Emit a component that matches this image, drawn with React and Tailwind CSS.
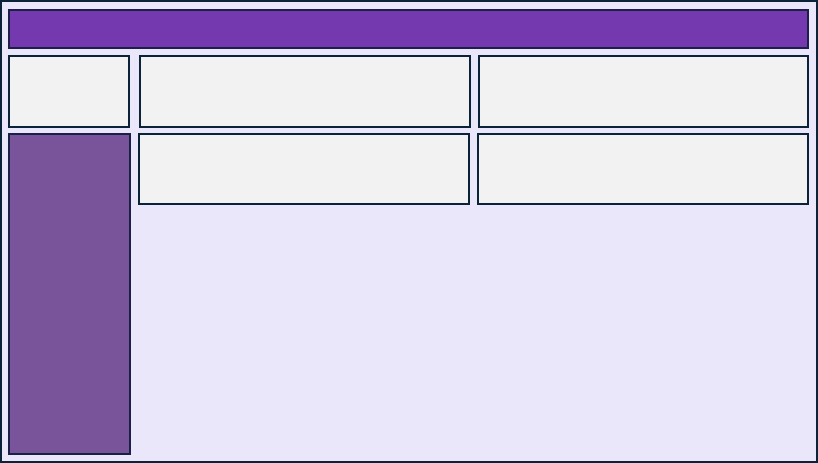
export default function App() {
  return (
    <div className="h-[463px] w-[818px] border-2 border-[#0b2339] bg-[#ebe7fb] px-[6px] pt-[7px] pb-[6px] flex flex-col">
      <div className="h-[40px] border-2 border-[#1c2048] bg-[#7439ae] mr-[1px]" />
      <div className="mt-[6px] h-[73px] flex">
        <div className="w-[122px] border-2 border-[#0b2339] bg-[#f2f2f2]" />
        <div className="ml-[9px] w-[332px] border-2 border-[#0b2339] bg-[#f2f2f2]" />
        <div className="ml-[7px] w-[331px] border-2 border-[#0b2339] bg-[#f2f2f2]" />
      </div>
      <div className="mt-[5px] flex-1 flex items-start">
        <div className="w-[123px] self-stretch border-2 border-[#1a2147] bg-[#7a549a]" />
        <div className="ml-[7px] w-[332px] h-[72px] border-2 border-[#0b2339] bg-[#f2f2f2]" />
        <div className="ml-[7px] w-[332px] h-[72px] border-2 border-[#0b2339] bg-[#f2f2f2]" />
      </div>
    </div>
  );
}
